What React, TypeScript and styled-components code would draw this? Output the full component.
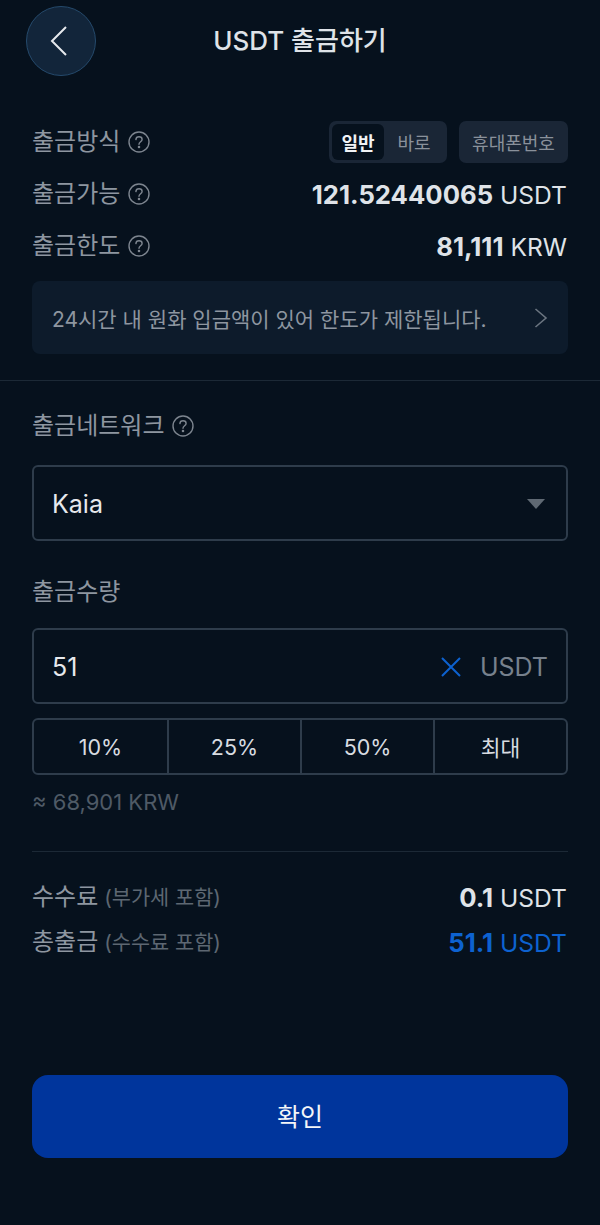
import styled, { createGlobalStyle } from 'styled-components'

const GlobalStyle = createGlobalStyle`
  html, body {
    margin: 0;
    padding: 0;
    background: #06111d;
  }
  * {
    box-sizing: border-box;
  }
  body {
    font-family: Inter, "Noto Sans CJK KR", sans-serif;
  }
`

const Page = styled.div`
  width: 600px;
  height: 1225px;
  background: #06111d;
  overflow: hidden;
`

const Header = styled.header`
  display: grid;
  grid-template-columns: 70px 1fr 70px;
  align-items: center;
  height: 70px;
  margin: 6px 26px 0;
`

const BackButton = styled.button`
  display: flex;
  align-items: center;
  justify-content: center;
  width: 70px;
  height: 70px;
  padding: 0 4px 0 0;
  border-radius: 50%;
  border: 1px solid #254a6c;
  background: #12253a;
`

const Title = styled.h1`
  margin: 0;
  text-align: center;
  color: #dfe3e8;
  font-size: 26px;
  font-weight: 500;
  line-height: 70px;
`

const Section = styled.section`
  padding: 0 32px;
`

const InfoRow = styled.div<{ $top: number }>`
  display: flex;
  align-items: center;
  justify-content: space-between;
  height: 40px;
  margin-top: ${(p) => p.$top}px;
`

const LabelWrap = styled.div`
  display: flex;
  align-items: center;
  gap: 8px;
`

const Label = styled.span`
  color: #8e96a0;
  font-size: 24px;
  font-weight: 400;
  line-height: 30px;
`

const Value = styled.div<{ $accent?: boolean }>`
  color: ${(p) => (p.$accent ? '#0d62d0' : '#dfe3e8')};
  font-size: 24.6px;
  font-weight: 400;
  white-space: nowrap;
  padding-right: 1px;

  strong {
    font-size: 25.7px;
    font-weight: 700;
  }
`

const Controls = styled.div`
  display: flex;
  gap: 12px;
`

const Segment = styled.div`
  display: flex;
  height: 42px;
  padding: 3px;
  border-radius: 7px;
  background: #1a2636;
`

const SegmentItem = styled.span<{ $active?: boolean }>`
  display: flex;
  align-items: center;
  justify-content: center;
  width: ${(p) => (p.$active ? '52px' : '60px')};
  border-radius: 6px;
  background: ${(p) => (p.$active ? '#06111d' : 'transparent')};
  color: ${(p) => (p.$active ? '#f1f3f5' : '#8a919b')};
  font-size: 18px;
  font-weight: ${(p) => (p.$active ? 700 : 400)};
`

const PhoneTab = styled.span`
  display: flex;
  align-items: center;
  justify-content: center;
  width: 109px;
  height: 42px;
  border-radius: 7px;
  background: #1a2636;
  color: #8a919b;
  font-size: 18px;
`

const Notice = styled.div`
  display: flex;
  align-items: center;
  justify-content: space-between;
  height: 73px;
  margin-top: 15px;
  padding: 0 20px;
  border-radius: 8px;
  background: #0d1b2b;
  color: #8e96a0;
  font-size: 21px;
`

const FullDivider = styled.hr`
  height: 1px;
  margin: 26px 0 0;
  border: 0;
  background: #1c2936;
`

const FieldLabel = styled.div<{ $top: number }>`
  display: flex;
  align-items: center;
  gap: 8px;
  height: 30px;
  margin-top: ${(p) => p.$top}px;
`

const Field = styled.div<{ $top: number }>`
  display: flex;
  align-items: center;
  justify-content: space-between;
  height: 76px;
  margin-top: ${(p) => p.$top}px;
  padding: 1px 18px 0;
  border: 2px solid #2e3c4b;
  border-radius: 6px;
  color: #e6e9ed;
  font-size: 25px;
`

const Caret = styled.span`
  width: 0;
  height: 0;
  margin-right: 3px;
  border-left: 9px solid transparent;
  border-right: 9px solid transparent;
  border-top: 10px solid #5f6973;
`

const FieldEnd = styled.div`
  display: flex;
  align-items: center;
  gap: 18px;
  color: #77818d;
`

const Percents = styled.div`
  display: grid;
  grid-template-columns: repeat(4, 1fr);
  height: 57px;
  margin-top: 14px;
  border: 2px solid #2e3c4b;
  border-radius: 6px;
`

const PercentItem = styled.div`
  display: flex;
  align-items: center;
  justify-content: center;
  color: #d8dce1;
  font-size: 21.5px;

  & + & {
    border-left: 2px solid #2e3c4b;
  }
`

const Approx = styled.div`
  height: 30px;
  margin-top: 12px;
  color: #4f5a66;
  font-size: 22px;
  line-height: 30px;
`

const Divider = styled.hr`
  height: 1px;
  margin: 34px 0 0;
  border: 0;
  background: #1c2936;
`

const Hint = styled.span`
  margin-left: 6px;
  color: #5d6772;
  font-size: 20.8px;
`

const FeeLabel = styled.div`
  color: #8e96a0;
  font-size: 24px;
  line-height: 30px;
  white-space: nowrap;
`

const Submit = styled.button`
  display: block;
  width: 100%;
  height: 83px;
  margin-top: 113px;
  padding: 0 0 4px;
  border: 0;
  border-radius: 16px;
  background: #00359c;
  color: #f4f6f8;
  font-family: inherit;
  font-size: 25px;
`

function HelpIcon() {
  return (
    <svg width="22" height="22" viewBox="0 0 22 22" fill="none" stroke="#7d858f" strokeWidth="1.4" strokeLinecap="round">
      <circle cx="11" cy="11" r="10" />
      <path d="M7.9 8.6C8 6.8 9.3 5.8 11 5.8C12.8 5.8 14.1 6.9 14.1 8.4C14.1 10.6 11 10.8 11 13.2" />
      <circle cx="11" cy="16" r="0.6" fill="#7d858f" />
    </svg>
  )
}

function App() {
  return (
    <Page>
      <GlobalStyle />
      <Header>
        <BackButton aria-label="뒤로">
          <svg width="20" height="32" viewBox="0 0 20 32" fill="none" stroke="#e6e9ed" strokeWidth="2">
            <path d="M17 2L3 16L17 30" />
          </svg>
        </BackButton>
        <Title>USDT 출금하기</Title>
        <span />
      </Header>

      <Section>
        <InfoRow $top={46}>
          <LabelWrap>
            <Label>출금방식</Label>
            <HelpIcon />
          </LabelWrap>
          <Controls>
            <Segment>
              <SegmentItem $active>일반</SegmentItem>
              <SegmentItem>바로</SegmentItem>
            </Segment>
            <PhoneTab>휴대폰번호</PhoneTab>
          </Controls>
        </InfoRow>
        <InfoRow $top={12}>
          <LabelWrap>
            <Label>출금가능</Label>
            <HelpIcon />
          </LabelWrap>
          <Value>
            <strong>121.52440065</strong> USDT
          </Value>
        </InfoRow>
        <InfoRow $top={12}>
          <LabelWrap>
            <Label>출금한도</Label>
            <HelpIcon />
          </LabelWrap>
          <Value>
            <strong>81,111</strong> KRW
          </Value>
        </InfoRow>
        <Notice>
          24시간 내 원화 입금액이 있어 한도가 제한됩니다.
          <svg width="14" height="22" viewBox="0 0 14 22" fill="none" stroke="#6b7580" strokeWidth="1.6">
            <path d="M1.5 2L12 11L1.5 20" />
          </svg>
        </Notice>
      </Section>

      <FullDivider />

      <Section>
        <FieldLabel $top={30}>
          <Label>출금네트워크</Label>
          <HelpIcon />
        </FieldLabel>
        <Field $top={24}>
          Kaia
          <Caret />
        </Field>
        <FieldLabel $top={36}>
          <Label>출금수량</Label>
        </FieldLabel>
        <Field $top={21}>
          51
          <FieldEnd>
            <svg width="22" height="22" viewBox="0 0 22 22" fill="none" stroke="#0d62d0" strokeWidth="2">
              <path d="M2 2L20 20M20 2L2 20" />
            </svg>
            USDT
          </FieldEnd>
        </Field>
        <Percents>
          <PercentItem>10%</PercentItem>
          <PercentItem>25%</PercentItem>
          <PercentItem>50%</PercentItem>
          <PercentItem>최대</PercentItem>
        </Percents>
        <Approx>≈ 68,901 KRW</Approx>
        <Divider />
        <InfoRow $top={25}>
          <FeeLabel>
            수수료<Hint>(부가세 포함)</Hint>
          </FeeLabel>
          <Value>
            <strong>0.1</strong> USDT
          </Value>
        </InfoRow>
        <InfoRow $top={5}>
          <FeeLabel>
            총출금<Hint>(수수료 포함)</Hint>
          </FeeLabel>
          <Value $accent>
            <strong>51.1</strong> USDT
          </Value>
        </InfoRow>
        <Submit>확인</Submit>
      </Section>
    </Page>
  )
}

export default App
